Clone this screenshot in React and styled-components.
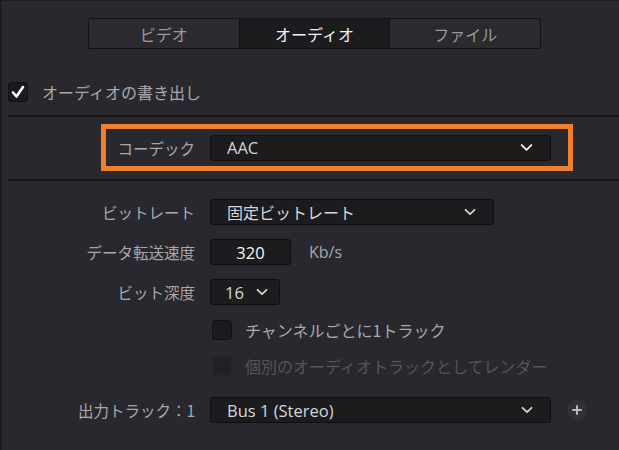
import React from "react";
import styled, { createGlobalStyle } from "styled-components";

const Global = createGlobalStyle`
  html, body { margin: 0; padding: 0; background: #28282e; }
  body { font-family: "Noto Sans CJK JP", "Noto Sans", sans-serif; }
`;

const Panel = styled.div`
  width: 619px;
  height: 450px;
  box-sizing: border-box;
  background: #28282e;
  border-left: 2px solid #1d1d21;
  border-top: 1px solid #1f1f23;
  overflow: hidden;
`;

const TabBar = styled.div`
  display: flex;
  width: 453px;
  height: 31px;
  margin: 17px 0 0 86px;
  box-sizing: border-box;
  border: 1px solid #141416;
  border-radius: 2px;
  background: #2a2a2f;
`;

const Tab = styled.div`
  flex: 1;
  display: flex;
  align-items: center;
  justify-content: center;
  font-size: 16px;
  color: ${(p) => (p.$active ? "#f2f2f2" : "#9a9a9e")};
  background: ${(p) => (p.$active ? "#1c1c1f" : "transparent")};
  border-left: ${(p) => (p.$first ? "none" : "1px solid #141416")};
`;

const ExportRow = styled.div`
  display: flex;
  align-items: center;
  gap: 14px;
  margin: 32px 0 0 6px;
  height: 22px;
`;

const Box = styled.div`
  width: 20px;
  height: 20px;
  box-sizing: border-box;
  border-radius: 3px;
  background: #1b1b1e;
  border: 1px solid ${(p) => (p.$dim ? "#26262a" : "#111113")};
  opacity: ${(p) => (p.$dim ? 0.55 : 1)};
  display: flex;
  align-items: center;
  justify-content: center;
`;

const CheckLabel = styled.span`
  font-size: 16px;
  color: ${(p) => (p.$dim ? "#55555a" : "#a8a8ac")};
`;

const Divider = styled.div`
  height: 2px;
  background: #18181b;
  margin-left: 6px;
  margin-top: ${(p) => p.$top}px;
`;

const Highlight = styled.div`
  display: grid;
  grid-template-columns: 78px 341px;
  column-gap: 15px;
  align-items: center;
  width: 472px;
  height: 47px;
  box-sizing: border-box;
  margin: 7px 0 0 99px;
  padding: 0 0 0 11px;
  border: 5px solid #ef7f2a;
`;

const Form = styled.div`
  display: grid;
  grid-template-columns: 193px auto;
  column-gap: 15px;
  row-gap: 14px;
  margin-top: 18px;
  align-items: center;
`;

const Label = styled.div`
  font-size: 15.5px;
  color: #a8a8ac;
  text-align: right;
  white-space: nowrap;
  margin-top: ${(p) => p.$push || 0}px;
`;

const Select = styled.div`
  width: ${(p) => p.$w}px;
  height: 26px;
  box-sizing: border-box;
  display: flex;
  align-items: center;
  justify-content: space-between;
  padding: 0 ${(p) => (p.$compact ? 10 : 16)}px 0 ${(p) => (p.$compact ? 14 : 16)}px;
  background: #1c1c1f;
  border: 1px solid #0f0f11;
  border-radius: 3px;
  font-size: 16.5px;
  color: #d6d6d8;
  font-family: "Open Sans", "Noto Sans CJK JP", sans-serif;
`;

const SelectText = styled.span`
  font-family: "Noto Sans CJK JP", sans-serif;
  font-size: 16px;
`;

const Inline = styled.div`
  display: flex;
  align-items: center;
  gap: ${(p) => p.$gap || 18}px;
  margin-top: ${(p) => p.$push || 0}px;
`;

const NumberField = styled.div`
  width: 81px;
  height: 26px;
  box-sizing: border-box;
  display: flex;
  align-items: center;
  justify-content: center;
  background: #1c1c1f;
  border: 1px solid #0f0f11;
  border-radius: 3px;
  font-family: "Open Sans", sans-serif;
  font-size: 16.5px;
  color: #f4f4f4;
`;

const Unit = styled.span`
  font-family: "Open Sans", sans-serif;
  font-size: 16px;
  color: #a8a8ac;
`;

const CheckRow = styled.div`
  display: flex;
  align-items: center;
  gap: 13px;
  padding-left: 2px;
  height: 22px;
`;

const PlusButton = styled.div`
  width: 20px;
  height: 20px;
  border-radius: 50%;
  background: #303036;
  display: flex;
  align-items: center;
  justify-content: center;
`;

const Chevron = ({ color = "#d0d0d2", size = 14 }) => (
  <svg width={size} height={size} viewBox="0 0 14 14">
    <path d="M2.5 4.8 L7 9.2 L11.5 4.8" fill="none" stroke={color} strokeWidth="1.8" strokeLinecap="round" strokeLinejoin="round" />
  </svg>
);

export default function App() {
  return (
    <>
      <Global />
      <Panel>
        <TabBar>
          <Tab $first>ビデオ</Tab>
          <Tab $active>オーディオ</Tab>
          <Tab>ファイル</Tab>
        </TabBar>

        <ExportRow>
          <Box>
            <svg width="16" height="16" viewBox="0 0 16 16">
              <path d="M3 8.5 L6.5 12.5 L13 3" fill="none" stroke="#ffffff" strokeWidth="2.6" strokeLinecap="round" strokeLinejoin="round" />
            </svg>
          </Box>
          <CheckLabel>オーディオの書き出し</CheckLabel>
        </ExportRow>

        <Divider $top={12} />

        <Highlight>
          <Label>コーデック</Label>
          <Select $w={341}>
            <span>AAC</span>
            <Chevron color="#ececec" size={15} />
          </Select>
        </Highlight>

        <Divider $top={8} />

        <Form>
          <Label>ビットレート</Label>
          <Select $w={284}>
            <SelectText>固定ビットレート</SelectText>
            <Chevron />
          </Select>

          <Label>データ転送速度</Label>
          <Inline>
            <NumberField>320</NumberField>
            <Unit>Kb/s</Unit>
          </Inline>

          <Label>ビット深度</Label>
          <Select $w={70} $compact>
            <span>16</span>
            <Chevron />
          </Select>

          <div />
          <CheckRow>
            <Box />
            <CheckLabel>チャンネルごとに1トラック</CheckLabel>
          </CheckRow>

          <div />
          <CheckRow>
            <Box $dim />
            <CheckLabel $dim>個別のオーディオトラックとしてレンダー</CheckLabel>
          </CheckRow>

          <Label $push={6}>出力トラック：1</Label>
          <Inline $gap={16} $push={6}>
            <Select $w={341}>
              <span>Bus 1 (Stereo)</span>
              <Chevron />
            </Select>
            <PlusButton>
              <svg width="12" height="12" viewBox="0 0 12 12">
                <path d="M6 2 V10 M2 6 H10" stroke="#b8b8bc" strokeWidth="2" strokeLinecap="round" />
              </svg>
            </PlusButton>
          </Inline>
        </Form>
      </Panel>
    </>
  );
}
